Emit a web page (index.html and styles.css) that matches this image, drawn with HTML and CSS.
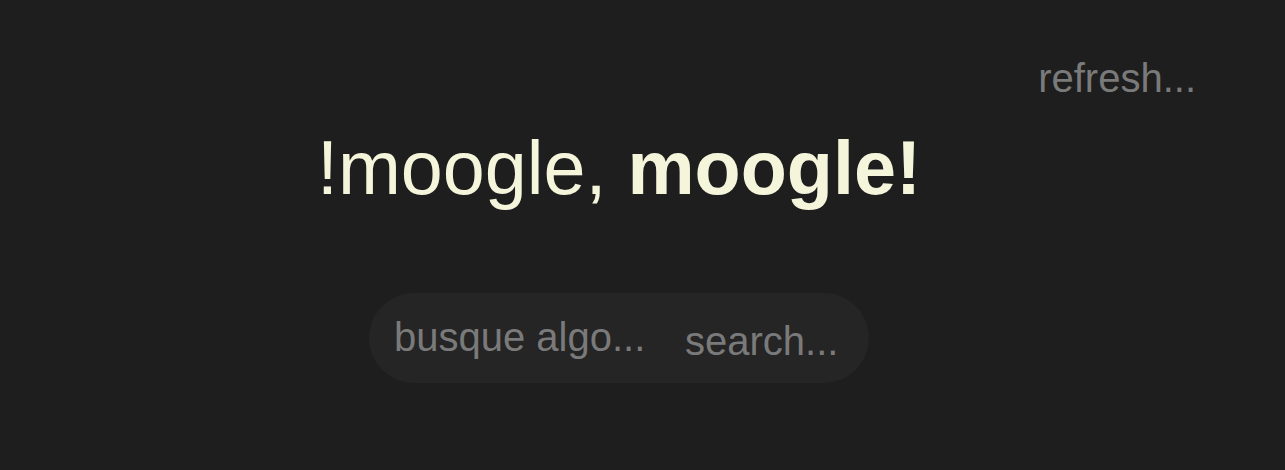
FILE: index.html
```html
<!DOCTYPE html>
<html lang="es">
<head>
<meta charset="utf-8">
<title>moogle</title>
<link rel="stylesheet" href="styles.css">
</head>
<body>
  <header class="top">
    <button class="refresh" type="button">refresh...</button>
  </header>
  <main class="main">
    <h1 class="title">!moogle, <b>moogle!</b></h1>
    <form class="search">
      <input class="query" type="text" placeholder="busque algo...">
      <button class="go" type="button">search...</button>
    </form>
  </main>
</body>
</html>
```

FILE: styles.css
```css
html, body {
  margin: 0;
  padding: 0;
  background: #1e1e1e;
  height: 100%;
}
body {
  font-family: "Liberation Sans", Arial, sans-serif;
  overflow: hidden;
}
.top {
  display: flex;
  justify-content: flex-end;
  padding: 55px 89px 0 0;
}
.refresh {
  background: none;
  border: none;
  padding: 0;
  margin: 0;
  font: 40px "Liberation Sans", Arial, sans-serif;
  line-height: 46px;
  color: #7a7a7a;
  cursor: pointer;
}
.main {
  display: flex;
  flex-direction: column;
  align-items: center;
  padding-right: 47px;
}
.title {
  margin: 24px 0 0;
  font-size: 75.5px;
  line-height: 86px;
  font-weight: normal;
  color: #f5f5dc;
  white-space: nowrap;
}
.title b {
  font-weight: bold;
}
.search {
  margin-top: 82px;
  width: 500px;
  height: 90px;
  box-sizing: border-box;
  border-radius: 45px;
  background: #252525;
  display: flex;
  align-items: center;
  padding: 0 26px 0 25px;
}
.query {
  flex: 0 0 291px;
  width: 291px;
  background: transparent;
  border: none;
  outline: none;
  padding: 0;
  margin-top: -3px;
  font: 40px "Liberation Sans", Arial, sans-serif;
  line-height: 46px;
  color: #7a7a7a;
}
.query::placeholder {
  color: #7a7a7a;
  opacity: 1;
}
.go {
  background: none;
  border: none;
  padding: 5px 0 0;
  margin: 0;
  font: 40px "Liberation Sans", Arial, sans-serif;
  line-height: 46px;
  color: #7a7a7a;
  cursor: pointer;
}
```
